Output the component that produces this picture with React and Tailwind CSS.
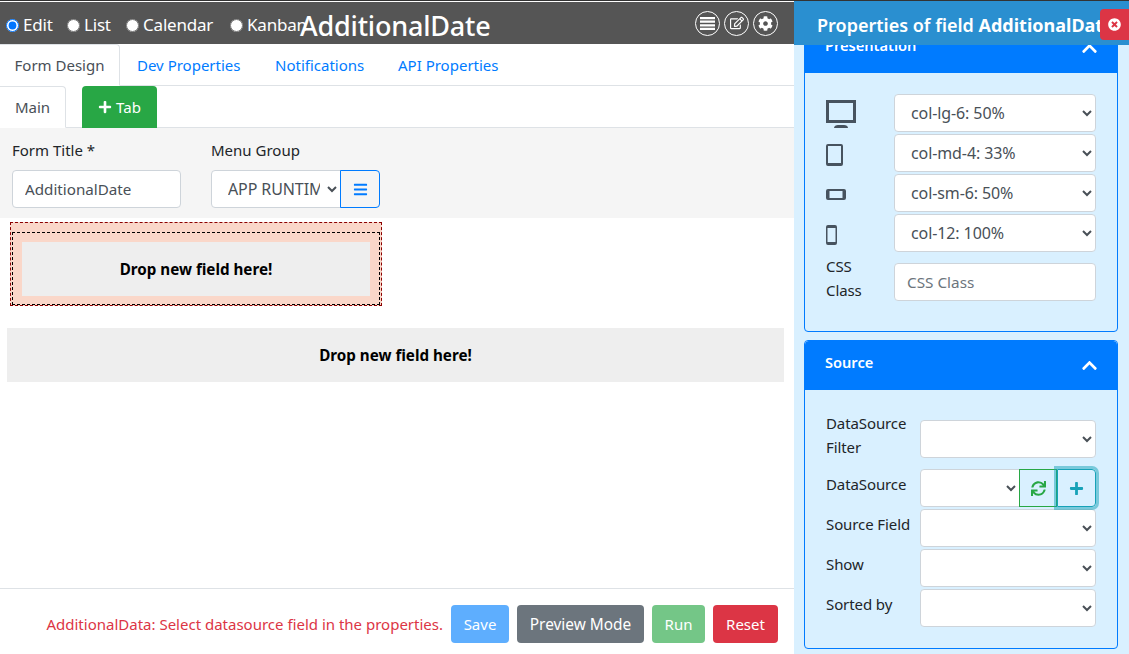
import React from "react";
import { FaPlus, FaBars, FaSync, FaChevronUp, FaTimesCircle, FaRegEdit, FaCog } from "react-icons/fa";

const font = { fontFamily: '"Noto Sans", "Open Sans", sans-serif' };

function Sel({ value, className = "" }) {
  return (
    <select defaultValue={value} className={"h-[38px] bg-white border border-[#ced4da] rounded-[4px] pl-3 pr-1 text-[16px] text-[#495057] tracking-[-0.1px] " + className}>
      <option>{value}</option>
    </select>
  );
}

function Radio({ label, checked, className = "" }) {
  return (
    <label className={"flex items-center gap-1 text-[17px] tracking-[-0.2px] text-white whitespace-nowrap " + className}>
      <input type="radio" name="mode" defaultChecked={checked} className="w-[13px] h-[13px] m-0 accent-[#0075ff]" />
      <span>{label}</span>
    </label>
  );
}

function RoundIcon({ children }) {
  return <div className="w-[25px] h-[25px] rounded-full border border-white flex items-center justify-center text-white text-[14px]">{children}</div>;
}

function Drop({ className = "" }) {
  return <div className={"bg-[#eeeeee] flex items-center justify-center text-[15.2px] font-bold text-black " + className}>Drop new field here!</div>;
}

function CardHeader({ title }) {
  return (
    <div className="relative h-[49px] bg-[#007bff] rounded-t-[4px] flex items-center justify-between pl-[20px] pr-[19px] text-white">
      <span className="text-[14.6px] font-semibold -mt-[6px]">{title}</span>
      <FaChevronUp className="text-[17px]" />
    </div>
  );
}

const ListIcon = () => (
  <svg width="15" height="13" viewBox="0 0 15 13" fill="#ffffff"><path d="M0 0h15v2.200H0zM0 3.600h15v2.200H0zM0 7.200h15v2.200H0zM0 10.800h15V13H0z" /></svg>
);
const Monitor = () => (
  <svg width="30" height="28" viewBox="0 0 30 28" fill="#47535f"><path d="M0 0h30v23H0zM3 3v17h24V3z" fillRule="evenodd" /><path d="M8 28c0-2 2-3 4-3h6c2 0 4 1 4 3z" /></svg>
);
const Tablet = () => (
  <svg width="17" height="22" viewBox="0 0 17 22" fill="#47535f"><path fillRule="evenodd" d="M2 0h13a2 2 0 0 1 2 2v18a2 2 0 0 1-2 2H2a2 2 0 0 1-2-2V2a2 2 0 0 1 2-2zM2 2v17h13V2z" /></svg>
);
const Landscape = () => (
  <svg width="20" height="11" viewBox="0 0 20 11" fill="#47535f"><path fillRule="evenodd" d="M2 0h16a2 2 0 0 1 2 2v7a2 2 0 0 1-2 2H2a2 2 0 0 1-2-2V2a2 2 0 0 1 2-2zM3.500 2v7h13V2z" /></svg>
);
const Phone = () => (
  <svg width="11" height="20" viewBox="0 0 11 20" fill="#47535f"><path fillRule="evenodd" d="M2 0h7a2 2 0 0 1 2 2v16a2 2 0 0 1-2 2H2a2 2 0 0 1-2-2V2a2 2 0 0 1 2-2zM1.500 3v14h8V3z" /></svg>
);

function DeviceRow({ icon, value, iconClass = "pt-[2px]" }) {
  return (
    <div className="flex items-center h-[38px] mb-[2px]">
      <div className={"w-[68px] flex items-center " + iconClass}>{icon}</div>
      <Sel value={value} className="w-[202px]" />
    </div>
  );
}

function SrcRow({ label }) {
  return (
    <div className="flex items-start h-[38px] mb-[2px]">
      <div className="w-[94px] text-[15px] tracking-[-0.1px] text-[#212529] leading-[24px] pt-[3px] whitespace-nowrap">{label}</div>
      <Sel value="" className="w-[176px]" />
    </div>
  );
}

export default function App() {
  return (
    <div style={font} className="relative flex w-[1129px] h-[654px] overflow-hidden bg-white border-t border-t-[#333333]">
      <div className="w-[794px] flex flex-col pt-[1px]">
        <div className="h-[42px] bg-[#555555] flex items-center pl-[6px] pr-[16px]">
          <div className="flex items-center pt-[4px]">
            <Radio label="Edit" checked className="w-[61px]" />
            <Radio label="List" className="w-[59px]" />
            <Radio label="Calendar" className="w-[104px]" />
            <Radio label="Kanban" className="w-[70px]" />
          </div>
          <div className="text-[27px] font-medium text-white tracking-[-0.2px] leading-none flex-1 pt-[4px]">AdditionalDate</div>
          <div className="flex gap-1">
            <RoundIcon><ListIcon /></RoundIcon>
            <RoundIcon><FaRegEdit className="text-[14px]" /></RoundIcon>
            <RoundIcon><FaCog className="text-[15px]" /></RoundIcon>
          </div>
        </div>

        <div className="h-[42px] flex items-end border-b border-b-[#dee2e6] text-[15px]">
          <div className="h-[42px] w-[120px] -mb-px bg-white border border-[#dee2e6] border-b-white border-l-0 rounded-tr-[4px] flex items-center justify-center text-[#495057]">Form Design</div>
          <div className="h-[41px] flex items-center pl-[17px] pt-[1px] text-[#007bff] w-[155px]">Dev Properties</div>
          <div className="h-[41px] flex items-center pt-[1px] text-[#007bff] w-[123px]">Notifications</div>
          <div className="h-[41px] flex items-center pt-[1px] text-[#007bff]">API Properties</div>
        </div>

        <div className="h-[42px] flex items-end border-b border-b-[#dee2e6] text-[15px]">
          <div className="h-[42px] w-[66px] -mb-px bg-white border border-[#dee2e6] border-b-white border-l-0 rounded-tr-[4px] flex items-center justify-center text-[#495057]">Main</div>
          <div className="h-[42px] w-[75px] ml-[16px] -mb-px bg-[#28a745] rounded-t-[4px] flex items-center justify-center gap-1 text-white">
            <FaPlus className="text-[14px]" /><span>Tab</span>
          </div>
        </div>

        <div className="h-[90px] bg-[#f5f5f5] flex pl-[12px] pt-[11px]">
          <div className="w-[199px]">
            <div className="text-[15px] text-[#212529] leading-[22px] mb-[9px]">Form Title *</div>
            <input readOnly value="AdditionalDate" className="w-[169px] h-[38px] bg-white border border-[#ced4da] rounded-[4px] px-3 text-[15.2px] text-[#495057]" />
          </div>
          <div>
            <div className="text-[15px] text-[#212529] leading-[22px] mb-[9px]">Menu Group</div>
            <div className="flex">
              <Sel value="APP RUNTIME" className="w-[130px] rounded-r-none" />
              <div className="w-[40px] h-[38px] -ml-px border border-[#007bff] rounded-r-[4px] flex items-center justify-center text-[#007bff] text-[15px]"><FaBars /></div>
            </div>
          </div>
        </div>

        <div className="flex-1 flex flex-col">
          <div className="ml-[10px] mt-[4px] w-[372px] h-[84px] bg-[#fad7c9] border border-dashed border-[#8b0000] pt-[9px] pl-px">
            <div className="w-[368px] h-[73px] border border-dashed border-black p-[9px]">
              <Drop className="w-[348px] h-[54px]" />
            </div>
          </div>
          <Drop className="ml-[7px] mt-[22px] w-[777px] h-[54px]" />
        </div>

        <div className="h-[66px] border-t border-t-[#dee2e6] flex items-start justify-end pt-[16px] pr-[16px] text-[15px]">
          <span className="text-[#dc3545] h-[38px] flex items-center mr-[8px]">AdditionalData: Select datasource field in the properties.</span>
          <div className="w-[58px] h-[38px] rounded-[4px] bg-[#5eaefe] text-white flex items-center justify-center">Save</div>
          <div className="w-[127px] h-[38px] ml-[8px] rounded-[4px] bg-[#6c757d] text-white flex items-center justify-center pt-[1px] text-[15.4px]">Preview Mode</div>
          <div className="w-[53px] h-[38px] ml-[8px] rounded-[4px] bg-[#74c687] text-white flex items-center justify-center">Run</div>
          <div className="w-[65px] h-[38px] ml-[8px] rounded-[4px] bg-[#dc3545] text-white flex items-center justify-center">Reset</div>
        </div>
      </div>

      <div className="w-[335px] h-full bg-[#d9f0ff] flex flex-col overflow-hidden">
        <div className="relative z-10 shrink-0 h-[44px] bg-[#2a8fd0] flex items-center pl-[23px] pt-[4px] text-white text-[18px] font-semibold whitespace-nowrap overflow-hidden">
          Properties of field&nbsp;<b className="font-bold">AdditionalDate</b>
        </div>
        <div className="pl-[10px] pr-[11px] -mt-[22px]">
          <div className="w-[314px] rounded-[4px] border border-[#007bff] overflow-hidden">
            <CardHeader title="Presentation" />
            <div className="h-[258px] pt-[21px] pl-[21px]">
              <DeviceRow icon={<Monitor />} value="col-lg-6: 50%" />
              <DeviceRow icon={<Tablet />} value="col-md-4: 33%" iconClass="pt-[3px]" />
              <DeviceRow icon={<Landscape />} value="col-sm-6: 50%" />
              <DeviceRow icon={<Phone />} value="col-12: 100%" iconClass="pt-[4px]" />
              <div className="flex mt-[2px]">
                <div className="w-[68px] text-[15px] tracking-[-0.1px] text-[#212529] leading-[24px]">CSS<br />Class</div>
                <input placeholder="CSS Class" className="w-[202px] h-[38px] mt-[9px] bg-white border border-[#ced4da] rounded-[4px] px-3 text-[15.3px] placeholder:text-[#6c757d]" />
              </div>
            </div>
          </div>
          <div className="w-[314px] mt-[8px] rounded-[4px] border border-[#007bff] overflow-hidden">
            <CardHeader title="Source" />
            <div className="h-[258px] pt-[30px] pl-[21px]">
              <div className="flex items-start h-[38px] mb-[11px]">
                <div className="w-[94px] text-[15px] tracking-[-0.1px] text-[#212529] leading-[24px] -mt-[9px]">DataSource<br />Filter</div>
                <Sel value="" className="w-[176px]" />
              </div>
              <div className="flex items-start h-[38px] mb-[2px]">
                <div className="w-[94px] text-[15px] tracking-[-0.1px] text-[#212529] leading-[24px] pt-[3px]">DataSource</div>
                <Sel value="" className="w-[100px] rounded-r-none" />
                <div className="w-[38px] h-[38px] -ml-px border border-[#28a745] flex items-center justify-center text-[#28a745] text-[15px]"><FaSync /></div>
                <div className="relative z-10 w-[39px] h-[38px] border border-[#17a2b8] rounded-r-[4px] flex items-center justify-center text-[#17a2b8] text-[15px] shadow-[0_0_0_3px_rgba(23,162,184,0.5)]"><FaPlus /></div>
              </div>
              <SrcRow label="Source Field" />
              <SrcRow label="Show" />
              <SrcRow label="Sorted by" />
            </div>
          </div>
        </div>
      </div>

      <div className="absolute z-20 left-[1100px] top-[8px] w-[29px] h-[31px] bg-[#dc3545] rounded-l-[4px] flex items-center justify-center text-white text-[13px]"><FaTimesCircle /></div>
    </div>
  );
}
